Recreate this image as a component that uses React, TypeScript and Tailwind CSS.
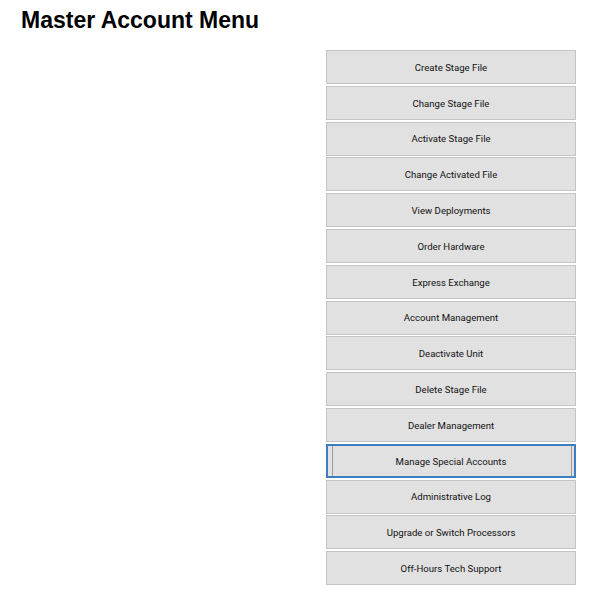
import React from "react";

const items = [
  "Create Stage File",
  "Change Stage File",
  "Activate Stage File",
  "Change Activated File",
  "View Deployments",
  "Order Hardware",
  "Express Exchange",
  "Account Management",
  "Deactivate Unit",
  "Delete Stage File",
  "Dealer Management",
  "Manage Special Accounts",
  "Administrative Log",
  "Upgrade or Switch Processors",
  "Off-Hours Tech Support",
];

export default function App() {
  return (
    <div className="w-[589px] h-[597px] bg-white overflow-hidden font-['Liberation_Sans',Arial,sans-serif]">
      <div className="flex flex-col">
        <h1 className="pl-[21px] pt-[5px] h-[50px] text-[23px] font-bold leading-[30px] text-black">
          Master Account Menu
        </h1>
        <div className="pl-[326px] flex flex-col gap-[1.8px]">
          {items.map((t, i) => {
            const focused = i === 11;
            return (
              <div
                key={t}
                className={
                  focused
                    ? "relative w-[250px] h-[34px] pt-[2px] bg-[#e1e1e1] border border-[#3c7fc1] shadow-[inset_0_0_0_1px_#3c7fc1] flex items-center justify-center text-[9.6px] text-[#111] font-['Roboto',sans-serif]"
                    : "relative w-[250px] h-[34px] pt-[2px] bg-[#e1e1e1] border border-[#c4c4c4] flex items-center justify-center text-[9.6px] text-[#111] font-['Roboto',sans-serif]"
                }
              >
                {focused && (
                  <div className="absolute left-[5px] right-[3px] top-[1px] bottom-[1px] border-l border-r border-[#9a9a9a]" />
                )}
                <span>{t}</span>
              </div>
            );
          })}
        </div>
      </div>
    </div>
  );
}
